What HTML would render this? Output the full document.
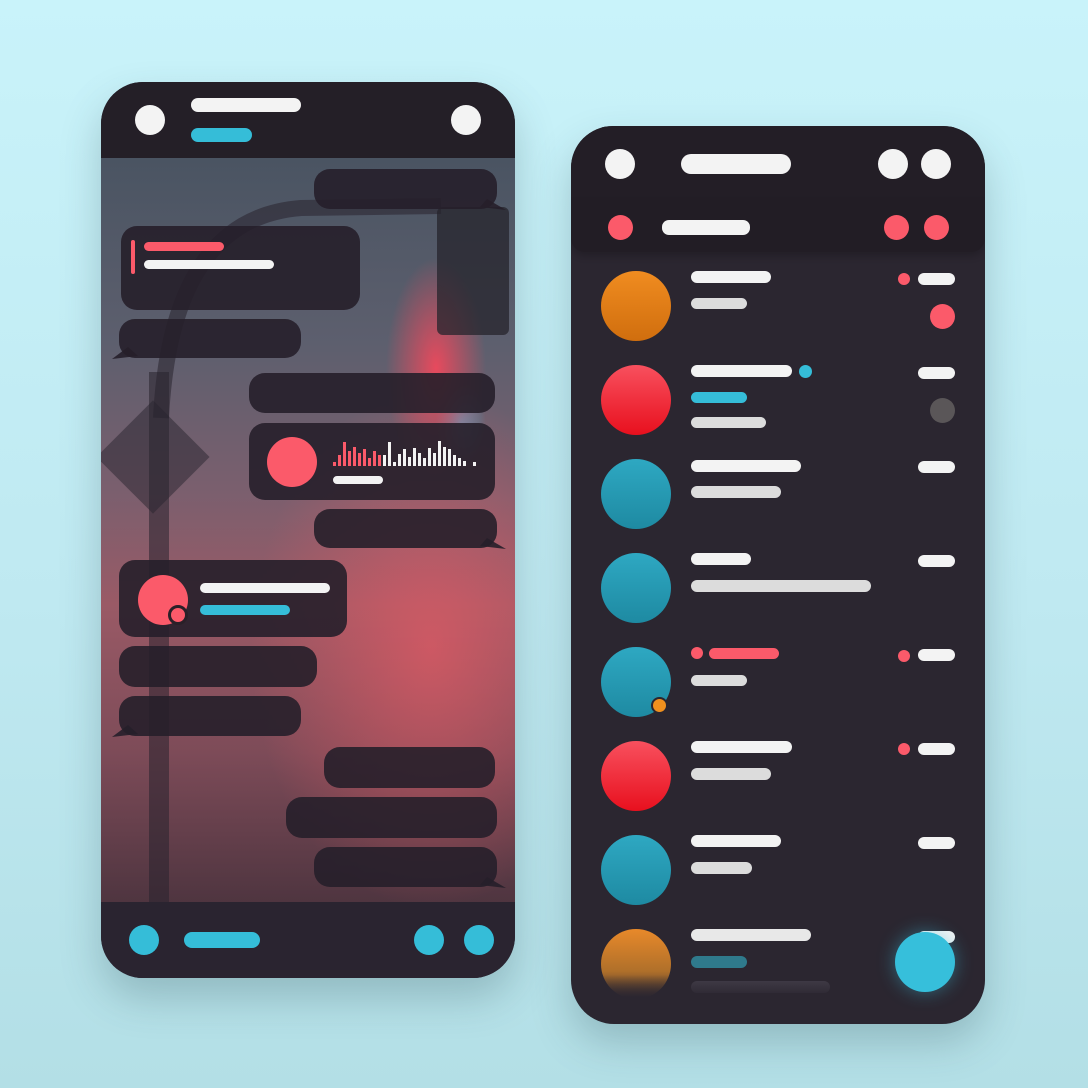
<!DOCTYPE html>
<html><head><style>
*{margin:0;padding:0;box-sizing:border-box}
body{width:1088px;height:1088px;overflow:hidden;background:linear-gradient(180deg,#c9f3fa 0%,#bfe9f1 55%,#b3dfe6 100%);position:relative;font-family:"Liberation Sans",sans-serif}
.a{position:absolute}
.p{position:absolute;border-radius:7px}
.c{position:absolute;border-radius:50%}
.w{background:#f3f3f3}.g{background:#dcdcdc}.cy{background:#35bdd8}.r{background:#fb5a6a}
.phone{position:absolute;width:414px;height:896px;border-radius:42px;overflow:hidden;box-shadow:0 20px 40px rgba(40,70,80,.25)}
.b{position:absolute;background:rgba(38,31,42,.9);border-radius:16px}
</style></head><body>

<!-- LEFT PHONE -->
<div class="phone" style="left:101px;top:82px;background:#2a2330">
  <div class="a" style="left:0;top:76px;width:414px;height:744px;
   background:
   radial-gradient(ellipse 180px 260px at 330px 490px,rgba(230,90,100,.7),rgba(230,90,100,0) 100%),
   radial-gradient(ellipse 50px 110px at 335px 210px,rgba(255,70,90,.85),rgba(255,70,90,0)),
   radial-gradient(ellipse 25px 40px at 360px 265px,rgba(60,190,230,.6),rgba(60,190,230,0)),
   linear-gradient(180deg,#4a5462 0%,#5d5f6e 25%,#7b5f6e 45%,#9a5a66 60%,#7d4b58 80%,#4f3540 100%)"></div>
  <svg class="a" style="left:0;top:76px" width="414" height="744">
    <path d="M60 260 Q70 60 200 50 L340 48" stroke="rgba(40,35,45,.55)" stroke-width="16" fill="none"/>
  </svg>
  <div class="a" style="left:48px;top:290px;width:20px;height:540px;background:rgba(40,35,45,.55)"></div>
  <div class="a" style="left:12px;top:335px;width:80px;height:80px;background:rgba(40,35,45,.5);transform:rotate(45deg)"></div>
  <div class="a" style="left:336px;top:125px;width:72px;height:128px;background:rgba(38,36,44,.75);border-radius:6px"></div>
  <!-- header -->
  <div class="a" style="left:0;top:0;width:414px;height:76px;background:#241f27"></div>
  <div class="c w" style="left:34px;top:23px;width:30px;height:30px"></div>
  <div class="c w" style="left:350px;top:23px;width:30px;height:30px"></div>
  <div class="p w" style="left:90px;top:16px;width:110px;height:14px"></div>
  <div class="p cy" style="left:90px;top:46px;width:61px;height:14px"></div>
  <!-- footer -->
  <div class="a" style="left:0;top:820px;width:414px;height:76px;background:#2a2430"></div>
  <div class="c cy" style="left:28px;top:843px;width:30px;height:30px"></div>
  <div class="p cy" style="left:83px;top:850px;width:76px;height:16px;border-radius:8px"></div>
  <div class="c cy" style="left:313px;top:843px;width:30px;height:30px"></div>
  <div class="c cy" style="left:363px;top:843px;width:30px;height:30px"></div>
</div>
<!-- left bubbles (page coords) -->
<div class="b" style="left:314px;top:169px;width:183px;height:40px"></div>
<div class="b" style="left:121px;top:226px;width:239px;height:84px"></div>
<div class="p r" style="left:131px;top:240px;width:4px;height:34px;border-radius:2px"></div>
<div class="p r" style="left:144px;top:242px;width:80px;height:9px"></div>
<div class="p w" style="left:144px;top:260px;width:130px;height:9px"></div>
<div class="b" style="left:119px;top:319px;width:182px;height:39px"></div>
<div class="b" style="left:249px;top:373px;width:246px;height:40px"></div>
<div class="b" style="left:249px;top:423px;width:246px;height:77px"></div>
<div class="c r" style="left:267px;top:437px;width:50px;height:50px"></div>
<svg class="a" style="left:333px;top:438px" width="148" height="30">
<g fill="#fb5a6a">
<rect x="0" y="24" width="3" height="4"/><rect x="5" y="17" width="3" height="11"/><rect x="10" y="4" width="3" height="24"/><rect x="15" y="13" width="3" height="15"/><rect x="20" y="9" width="3" height="19"/><rect x="25" y="15" width="3" height="13"/><rect x="30" y="11" width="3" height="17"/><rect x="35" y="20" width="3" height="8"/><rect x="40" y="13" width="3" height="15"/><rect x="45" y="17" width="3" height="11"/></g>
<g fill="#f3f3f3">
<rect x="50" y="17" width="3" height="11"/><rect x="55" y="4" width="3" height="24"/><rect x="60" y="24" width="3" height="4"/><rect x="65" y="16" width="3" height="12"/><rect x="70" y="11" width="3" height="17"/><rect x="75" y="19" width="3" height="9"/><rect x="80" y="10" width="3" height="18"/><rect x="85" y="15" width="3" height="13"/><rect x="90" y="20" width="3" height="8"/><rect x="95" y="10" width="3" height="18"/><rect x="100" y="15" width="3" height="13"/><rect x="105" y="3" width="3" height="25"/><rect x="110" y="9" width="3" height="19"/><rect x="115" y="11" width="3" height="17"/><rect x="120" y="17" width="3" height="11"/><rect x="125" y="20" width="3" height="8"/><rect x="130" y="23" width="3" height="5"/><rect x="140" y="24" width="3" height="4"/></g></svg>
<div class="p w" style="left:333px;top:476px;width:50px;height:8px"></div>
<div class="b" style="left:314px;top:509px;width:183px;height:39px"></div>
<div class="b" style="left:119px;top:560px;width:228px;height:77px"></div>
<div class="c r" style="left:138px;top:575px;width:50px;height:50px"></div>
<div class="c r" style="left:168px;top:605px;width:20px;height:20px;border:3px solid #2a2028"></div>
<div class="p w" style="left:200px;top:583px;width:130px;height:10px"></div>
<div class="p cy" style="left:200px;top:605px;width:90px;height:10px"></div>
<div class="b" style="left:119px;top:646px;width:198px;height:41px"></div>
<div class="b" style="left:119px;top:696px;width:182px;height:40px"></div>
<div class="b" style="left:324px;top:747px;width:171px;height:41px"></div>
<div class="b" style="left:286px;top:797px;width:211px;height:41px"></div>
<div class="b" style="left:314px;top:847px;width:183px;height:40px"></div>
<svg class="a" style="left:0;top:0" width="1088" height="1088">
<g fill="rgba(38,31,42,.9)">
<path d="M487 199 L506 210 L480 207Z"/><path d="M487 538 L506 549 L480 546Z"/><path d="M487 877 L506 888 L480 885Z"/>
<path d="M128 347 L112 359 L138 356Z"/><path d="M128 725 L112 737 L138 734Z"/>
</g></svg>

<!-- RIGHT PHONE -->
<div class="phone" style="left:571px;top:126px;background:#2b2630">
  <div class="a" style="left:0;top:0;width:414px;height:74px;background:#231e26"></div>
  <div class="c w" style="left:34px;top:23px;width:30px;height:30px"></div>
  <div class="p w" style="left:110px;top:28px;width:110px;height:20px;border-radius:10px"></div>
  <div class="c w" style="left:307px;top:23px;width:30px;height:30px"></div>
  <div class="c w" style="left:350px;top:23px;width:30px;height:30px"></div>
  <div class="a" style="left:0;top:74px;width:414px;height:52px;background:#221d25;border-radius:0 0 14px 14px;box-shadow:0 4px 8px rgba(0,0,0,.2)"></div>
  <div class="c r" style="left:37px;top:89px;width:25px;height:25px"></div>
  <div class="p w" style="left:91px;top:94px;width:88px;height:15px"></div>
  <div class="c r" style="left:313px;top:89px;width:25px;height:25px"></div>
  <div class="c r" style="left:353px;top:89px;width:25px;height:25px"></div>
</div>
<!-- rows -->
<div class="c" style="left:601px;top:271px;width:70px;height:70px;background:linear-gradient(#f08c20,#d06e0e)"></div>
<div class="p w" style="left:691px;top:271px;width:80px;height:12px"></div>
<div class="p g" style="left:691px;top:298px;width:56px;height:11px"></div>
<div class="c r" style="left:898px;top:273px;width:12px;height:12px"></div>
<div class="p w" style="left:918px;top:273px;width:37px;height:12px"></div>
<div class="c r" style="left:930px;top:304px;width:25px;height:25px"></div>

<div class="c" style="left:601px;top:365px;width:70px;height:70px;background:linear-gradient(#f8505e,#e8101e)"></div>
<div class="p w" style="left:691px;top:365px;width:101px;height:12px"></div>
<div class="c cy" style="left:799px;top:365px;width:13px;height:13px"></div>
<div class="p cy" style="left:691px;top:392px;width:56px;height:11px"></div>
<div class="p g" style="left:691px;top:417px;width:75px;height:11px"></div>
<div class="p w" style="left:918px;top:367px;width:37px;height:12px"></div>
<div class="c" style="left:930px;top:398px;width:25px;height:25px;background:#5a5658"></div>

<div class="c" style="left:601px;top:459px;width:70px;height:70px;background:linear-gradient(#2ea8c2,#1e8aa2)"></div>
<div class="p w" style="left:691px;top:460px;width:110px;height:12px"></div>
<div class="p g" style="left:691px;top:486px;width:90px;height:12px"></div>
<div class="p w" style="left:918px;top:461px;width:37px;height:12px"></div>

<div class="c" style="left:601px;top:553px;width:70px;height:70px;background:linear-gradient(#2ea8c2,#1e8aa2)"></div>
<div class="p w" style="left:691px;top:553px;width:60px;height:12px"></div>
<div class="p g" style="left:691px;top:580px;width:180px;height:12px"></div>
<div class="p w" style="left:918px;top:555px;width:37px;height:12px"></div>

<div class="c" style="left:601px;top:647px;width:70px;height:70px;background:linear-gradient(#2ea8c2,#1e8aa2)"></div>
<div class="c" style="left:651px;top:697px;width:17px;height:17px;background:#f0901e;border:2px solid #2b2630"></div>
<div class="c r" style="left:691px;top:647px;width:12px;height:12px"></div>
<div class="p r" style="left:709px;top:648px;width:70px;height:11px"></div>
<div class="p g" style="left:691px;top:675px;width:56px;height:11px"></div>
<div class="c r" style="left:898px;top:650px;width:12px;height:12px"></div>
<div class="p w" style="left:918px;top:649px;width:37px;height:12px"></div>

<div class="c" style="left:601px;top:741px;width:70px;height:70px;background:linear-gradient(#f8505e,#e8101e)"></div>
<div class="p w" style="left:691px;top:741px;width:101px;height:12px"></div>
<div class="p g" style="left:691px;top:768px;width:80px;height:12px"></div>
<div class="c r" style="left:898px;top:743px;width:12px;height:12px"></div>
<div class="p w" style="left:918px;top:743px;width:37px;height:12px"></div>

<div class="c" style="left:601px;top:835px;width:70px;height:70px;background:linear-gradient(#2ea8c2,#1e8aa2)"></div>
<div class="p w" style="left:691px;top:835px;width:90px;height:12px"></div>
<div class="p g" style="left:691px;top:862px;width:61px;height:12px"></div>
<div class="p w" style="left:918px;top:837px;width:37px;height:12px"></div>

<div class="c" style="left:601px;top:929px;width:70px;height:70px;background:linear-gradient(#e8892a,#b0702a 60%,#5a4030 90%)"></div>
<div class="p" style="left:691px;top:929px;width:120px;height:12px;background:#e8e8e8"></div>
<div class="p" style="left:691px;top:956px;width:56px;height:12px;background:#2f7a8c"></div>
<div class="p" style="left:691px;top:981px;width:139px;height:12px;background:#45404c"></div>
<div class="p w" style="left:918px;top:931px;width:37px;height:12px"></div>
<div class="a" style="left:572px;top:975px;width:412px;height:49px;background:linear-gradient(180deg,rgba(43,38,48,0),#2b2630 45%);border-radius:0 0 42px 42px"></div>
<div class="c" style="left:895px;top:932px;width:60px;height:60px;background:#36bfdb;box-shadow:0 0 18px rgba(54,191,219,.45)"></div>
</body></html>
